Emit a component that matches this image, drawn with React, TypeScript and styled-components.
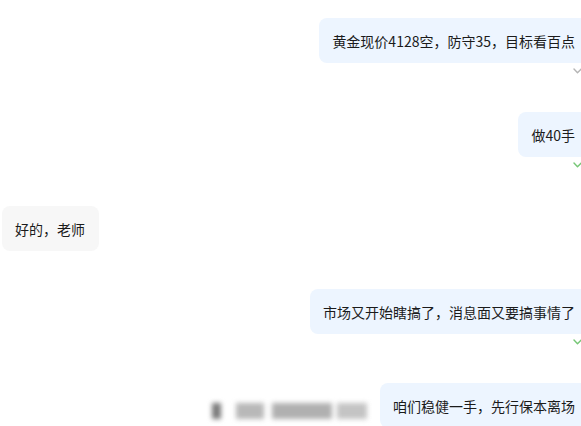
import React from "react";
import styled, { createGlobalStyle } from "styled-components";

const Global = createGlobalStyle`
  html, body { margin: 0; padding: 0; background: #ffffff; }
  body { font-family: "Noto Sans CJK SC", "Noto Sans", sans-serif; overflow: hidden; }
`;

const Page = styled.div`
  width: 581px;
  height: 426px;
  overflow: hidden;
  padding-top: 18px;
  box-sizing: border-box;
`;

const List = styled.div`
  display: flex;
  flex-direction: column;
  gap: 38px;
`;

const Item = styled.div<{ $mine: boolean }>`
  display: flex;
  flex-direction: column;
  align-items: ${(p) => (p.$mine ? "flex-end" : "flex-start")};
  margin-right: ${(p) => (p.$mine ? "-8px" : "0")};
  margin-left: ${(p) => (p.$mine ? "0" : "2px")};
`;

const Line = styled.div`
  display: flex;
  align-items: center;
  gap: 13px;
`;

const Bubble = styled.div<{ $mine: boolean }>`
  height: 45px;
  box-sizing: border-box;
  padding: 0 14px 0 13px;
  display: flex;
  align-items: center;
  border-radius: 8px;
  font-size: 14px;
  color: #1b1b1b;
  white-space: nowrap;
  background: ${(p) => (p.$mine ? "#edf5ff" : "#f7f7f7")};
`;

const Status = styled.div`
  height: 11px;
  display: flex;
  align-items: flex-end;
  padding-right: 7px;
`;

const Blurred = styled.div`
  display: flex;
  align-items: center;
  filter: blur(2.5px);
  margin-top: 10px;
`;

const Block = styled.span<{ $w: number; $tone: string; $gap: number }>`
  display: inline-block;
  height: 16px;
  width: ${(p) => p.$w}px;
  margin-left: ${(p) => p.$gap}px;
  background: ${(p) => p.$tone};
`;

function Check({ color }: { color: string }) {
  return (
    <svg width="9" height="6" viewBox="0 0 9 6">
      <path d="M1 1 L4.5 4.8 L8.5 0.8" fill="none" stroke={color} strokeWidth="1.4" strokeLinecap="round" strokeLinejoin="round" />
    </svg>
  );
}

type Msg = { text: string; mine: boolean; check?: string; extra?: boolean };

const messages: Msg[] = [
  { text: "黄金现价4128空，防守35，目标看百点", mine: true, check: "#b5b5b5" },
  { text: "做40手", mine: true, check: "#76c776" },
  { text: "好的，老师", mine: false },
  { text: "市场又开始瞎搞了，消息面又要搞事情了", mine: true, check: "#76c776" },
  { text: "咱们稳健一手，先行保本离场", mine: true, extra: true },
];

export default function App() {
  return (
    <Page>
      <Global />
      <List>
        {messages.map((m, i) => (
          <Item key={i} $mine={m.mine}>
            <Line>
              {m.extra && (
                <Blurred>
                  <Block $w={9} $gap={0} $tone="#7a7a7a" />
                  <Block $w={28} $gap={15} $tone="#b8b8b8" />
                  <Block $w={60} $gap={8} $tone="#b0b0b0" />
                  <Block $w={30} $gap={5} $tone="#c4c4c4" />
                </Blurred>
              )}
              <Bubble $mine={m.mine}>{m.text}</Bubble>
            </Line>
            {m.check && (
              <Status>
                <Check color={m.check} />
              </Status>
            )}
          </Item>
        ))}
      </List>
    </Page>
  );
}
